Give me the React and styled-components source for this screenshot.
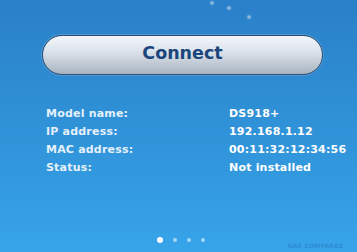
import React from 'react';
import styled, { createGlobalStyle } from 'styled-components';

const GlobalStyle = createGlobalStyle`
  html, body {
    margin: 0;
    padding: 0;
  }
  body {
    font-family: "DejaVu Sans", Verdana, sans-serif;
  }
`;

const Screen = styled.div`
  position: relative;
  width: 357px;
  height: 252px;
  overflow: hidden;
  box-sizing: border-box;
  padding: 35px 34px 0 42px;
  background: linear-gradient(180deg, #2a80c9 0%, #2f90d6 45%, #37a4e9 100%);
  display: flex;
  flex-direction: column;
`;

const Sparkle = styled.span`
  position: absolute;
  width: ${p => p.size}px;
  height: ${p => p.size}px;
  border-radius: 50%;
  background: radial-gradient(circle, rgba(255, 255, 255, 0.6) 0%, rgba(255, 255, 255, 0) 70%);
`;

const ConnectButton = styled.button`
  height: 40px;
  width: 100%;
  border-radius: 20px;
  border: 1px solid #2f4f72;
  box-shadow: 0 0 0 1px rgba(120, 170, 215, 0.5);
  background: linear-gradient(180deg, #f3f7fb 0%, #dfe6ee 35%, #c3ccd6 70%, #a9b3bf 100%);
  color: #1b467c;
  font-family: "DejaVu Sans", Verdana, sans-serif;
  font-weight: bold;
  font-size: 17.5px;
  padding: 0 0 4px;
  cursor: pointer;
`;

const InfoTable = styled.div`
  margin-top: 32px;
  margin-left: 4px;
  display: grid;
  grid-template-columns: 183px auto;
  row-gap: 5px;
  font-size: 11px;
  font-weight: bold;
  line-height: 13px;
  letter-spacing: 0.2px;
`;

const Cell = styled.div`
  white-space: nowrap;
  color: ${p => (p.value ? '#ffffff' : '#e4f0fa')};
`;

const Dots = styled.div`
  position: absolute;
  left: 157px;
  top: 237px;
  display: flex;
  align-items: center;
  gap: 10px;
`;

const Dot = styled.span`
  width: ${p => (p.active ? 6 : 4)}px;
  height: ${p => (p.active ? 6 : 4)}px;
  border-radius: 50%;
  background: ${p => (p.active ? '#ffffff' : '#a6d6f6')};
`;

const Watermark = styled.div`
  position: absolute;
  right: 14px;
  bottom: 3px;
  font-size: 6px;
  font-weight: bold;
  color: rgba(40, 120, 190, 0.55);
  letter-spacing: 0.2px;
`;

const rows = [
  ['Model name:', 'DS918+'],
  ['IP address:', '192.168.1.12'],
  ['MAC address:', '00:11:32:12:34:56'],
  ['Status:', 'Not installed'],
];

export default function App() {
  return (
    <>
      <GlobalStyle />
      <Screen>
        <Sparkle size={6} style={{ left: 209, top: 0 }} />
        <Sparkle size={6} style={{ left: 226, top: 5 }} />
        <Sparkle size={6} style={{ left: 246, top: 14 }} />
        <ConnectButton>Connect</ConnectButton>
        <InfoTable>
          {rows.map(([label, value]) => (
            <React.Fragment key={label}>
              <Cell>{label}</Cell>
              <Cell value>{value}</Cell>
            </React.Fragment>
          ))}
        </InfoTable>
        <Dots>
          <Dot active />
          <Dot />
          <Dot />
          <Dot />
        </Dots>
        <Watermark>NAS COMPARES</Watermark>
      </Screen>
    </>
  );
}
